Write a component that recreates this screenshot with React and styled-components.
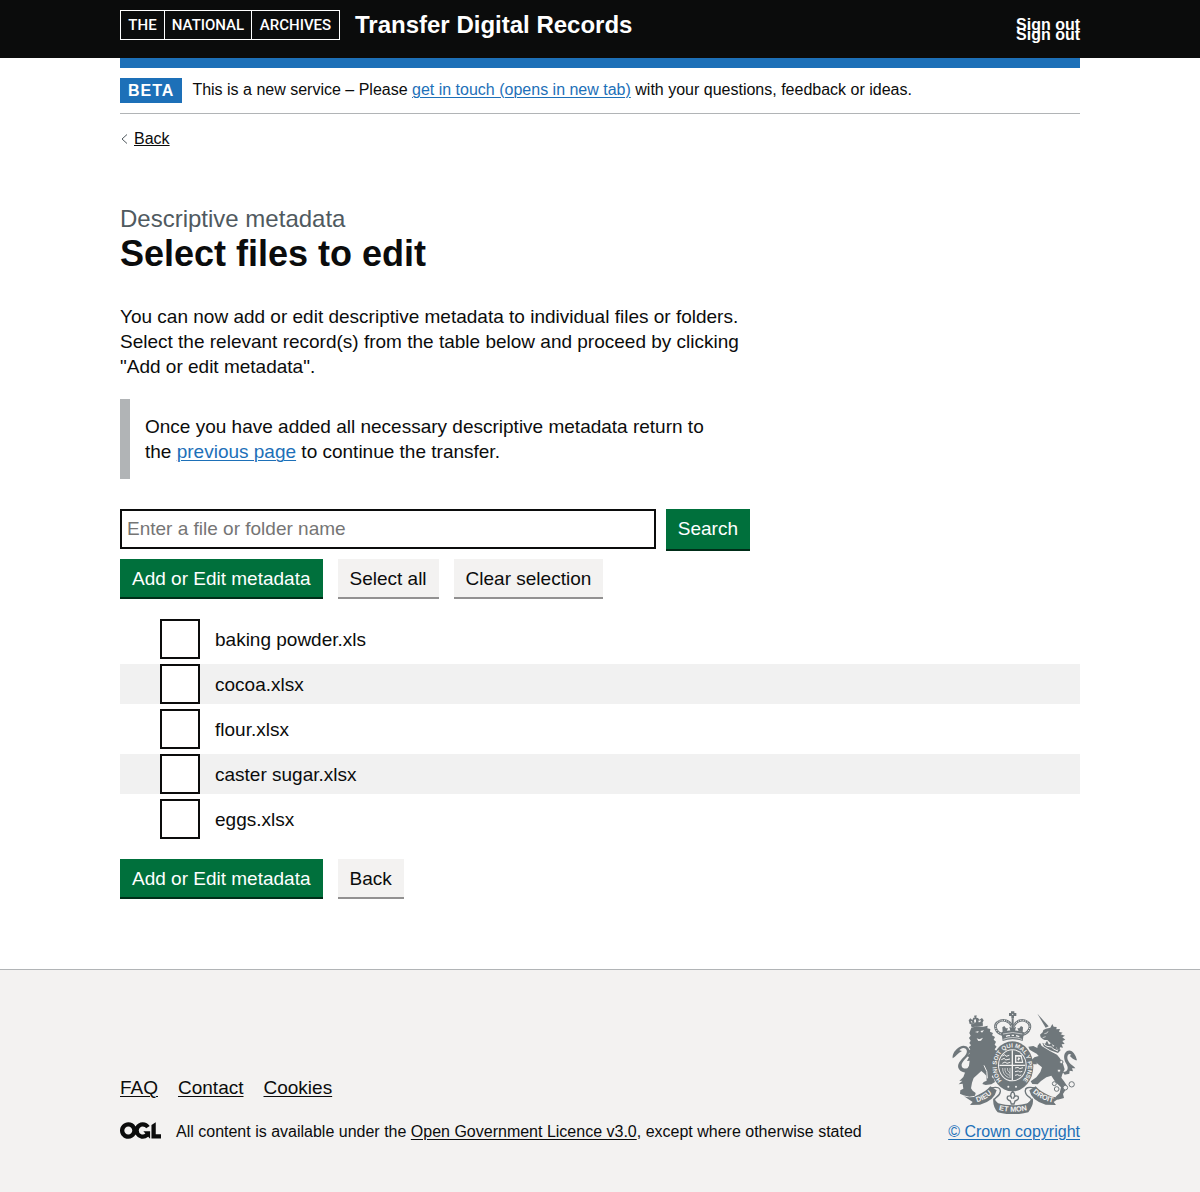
import React, { useState } from "react";
import styled, { createGlobalStyle } from "styled-components";

const ink = "#0b0c0c";
const blue = "#1d70b8";
const green = "#00703c";
const pale = "#f3f2f1";

const GlobalStyle = createGlobalStyle`
  *, *::before, *::after { box-sizing: border-box; }
  html { background: ${pale}; }
  body {
    margin: 0;
    background: #fff;
    color: ${ink};
    font-family: "Liberation Sans", Arial, sans-serif;
    font-size: 19px;
    line-height: 25px;
    -webkit-font-smoothing: antialiased;
  }
`;

const Container = styled.div`
  max-width: 960px;
  margin: 0 auto;
  @media (max-width: 1020px) { margin: 0 30px; }
`;

const Header = styled.header`
  background: ${ink};
  color: #fff;
`;

const HeaderRow = styled(Container)`
  display: flex;
  align-items: flex-start;
  gap: 15px;
  padding: 10px 0 18px;
`;

const LogoLink = styled.a`
  display: grid;
  grid-template-columns: 43px 87px 88px;
  height: 30px;
  border: 1px solid #fff;
  color: #fff;
  text-align: center;
  text-decoration: none;
  font: 500 15px/28px Roboto, sans-serif;
`;

const LogoWord = styled.span`
  & + & { border-left: 1px solid #fff; }
`;

const ServiceLink = styled.a`
  color: #fff;
  font-size: 24px;
  line-height: 30px;
  font-weight: 700;
  text-decoration: none;
`;

const AccountNav = styled.nav`
  display: flex;
  flex-direction: column;
  margin-left: auto;
  padding-top: 10px;
`;

const AccountLink = styled.a`
  color: #fff;
  font-size: 16px;
  line-height: 10px;
  font-weight: 700;
  text-decoration: none;
`;

const HeaderBar = styled(Container)`
  background: ${blue};
  height: 10px;
`;

const PhaseBanner = styled.div`
  display: flex;
  gap: 10px;
  padding: 10px 0;
  border-bottom: 1px solid #b1b4b6;
  font-size: 16px;
`;

const Tag = styled.strong`
  padding: 0 8px;
  background: ${blue};
  color: #fff;
  letter-spacing: 1px;
  text-transform: uppercase;
`;

const PhaseText = styled.span`
  line-height: 24px;
`;

const Link = styled.a`
  color: ${(p) => (p.$plain ? ink : blue)};
  text-decoration: underline;
  text-decoration-thickness: 1px;
  text-underline-offset: 2px;
`;

const BackLink = styled(Link)`
  display: inline-flex;
  align-items: center;
  gap: 6px;
  margin-top: 15px;
  font-size: 16px;
  line-height: 20px;
  text-decoration: none;
  span {
    text-decoration: underline;
    text-decoration-thickness: 1px;
    text-underline-offset: 1px;
  }
`;

const Main = styled.main`
  padding: 54px 0 70px;
`;

const Column = styled.div`
  max-width: 630px;
`;

const Caption = styled.span`
  display: block;
  color: #505a5f;
  font-size: 24px;
  line-height: 30px;
`;

const Title = styled.h1`
  margin: 0 0 30px;
  font-size: 36px;
  line-height: 40px;
`;

const Paragraph = styled.p`
  margin: 0 0 20px;
`;

const Inset = styled.div`
  margin-bottom: 30px;
  padding: 15px;
  border-left: 10px solid #b1b4b6;
`;

const SearchRow = styled.div`
  display: flex;
  gap: 10px;
`;

const SearchBox = styled.input`
  flex: 1;
  min-width: 0;
  height: 40px;
  padding: 5px;
  border: 2px solid ${ink};
  border-radius: 0;
  background: #fff;
  color: ${ink};
  font: inherit;
  &::placeholder { color: #757575; opacity: 1; }
`;

const Button = styled.button`
  height: ${(p) => (p.$tall ? 40 : 38)}px;
  padding: ${(p) => (p.$tall ? "0 12px 2px" : "0 12px")};
  border: 0;
  background: ${(p) => (p.$secondary ? pale : green)};
  color: ${(p) => (p.$secondary ? ink : "#fff")};
  box-shadow: 0 2px 0 ${(p) => (p.$secondary ? "#929191" : "#002d18")};
  font: inherit;
  cursor: pointer;
`;

const ButtonRow = styled.div`
  display: flex;
  flex-wrap: wrap;
  gap: 15px;
  padding-bottom: 2px;
`;

const FileForm = styled.form`
  display: flex;
  flex-direction: column;
  gap: 20px;
  margin-top: 10px;
`;

const FileList = styled.ul`
  display: grid;
  gap: 5px;
  margin: 0;
  padding: 0;
  list-style: none;
`;

const FileRow = styled.li`
  display: flex;
  align-items: center;
  padding-left: 40px;
  &:nth-child(even) { background: #f1f1f1; }
`;

const Checkbox = styled.input`
  appearance: none;
  width: 40px;
  height: 40px;
  margin: 0;
  border: 2px solid ${ink};
  background: #fff;
  cursor: pointer;
  &:checked { box-shadow: inset 0 0 0 8px #fff; background: ${ink}; }
`;

const FileLabel = styled.label`
  padding-left: 15px;
  cursor: pointer;
`;

const Footer = styled.footer`
  padding: 40px 0 48px;
  border-top: 1px solid #b1b4b6;
  background: ${pale};
`;

const FooterRow = styled(Container)`
  display: flex;
  flex-wrap: wrap;
  align-items: flex-end;
  justify-content: space-between;
  gap: 30px;
`;

const FooterLinks = styled.ul`
  display: flex;
  gap: 20px;
  margin: 0 0 20px;
  padding: 0;
  list-style: none;
`;

const Licence = styled.div`
  display: flex;
  align-items: flex-start;
  gap: 15px;
  font-size: 16px;
  line-height: 24px;
`;

const OglMark = styled.svg`
  flex: none;
  display: block;
  margin-top: 2px;
`;

const Copyright = styled(Link)`
  display: flex;
  flex-direction: column;
  align-items: center;
  gap: 6px;
  font-size: 16px;
  line-height: 24px;
`;

function Ogl() {
  return (
    <OglMark width="41" height="17" viewBox="0 0 483.2 195.7" fill={ink} aria-hidden="true">
      <path d="M421.5 142.8V.1l-50.7 32.3v161.1h112.4v-50.7zm-122.3-9.6A47.12 47.12 0 0 1 221 97.8c0-26 21.1-47.1 47.1-47.1 16.7 0 31.4 8.7 39.7 21.8l42.7-27.2A97.63 97.63 0 0 0 268.1 0c-36.5 0-68.3 20.1-85.1 49.7A98 98 0 0 0 97.8 0C43.9 0 0 43.9 0 97.8s43.9 97.8 97.8 97.8c36.5 0 68.3-20.1 85.1-49.7a97.76 97.76 0 0 0 149.6 25.4l19.4 22.2h3v-87.8h-80l24.3 27.5zM97.8 145c-26 0-47.1-21.1-47.1-47.1s21.1-47.1 47.1-47.1 47.1 21.1 47.1 47.1S123.8 145 97.8 145" />
    </OglMark>
  );
}

function Crest() {
  const c = "#6f777b";
  return (
    <svg width="125" height="104" viewBox="36 27 375 312" fill={c} aria-hidden="true">
      <defs>
        <path id="garter" d="M189 242A47 57 0 1 1 245 242" />
        <path id="scrollLeft" d="M106 305Q136 299 160 274" />
        <path id="scrollMid" d="M172 326Q218 339 266 326" />
        <path id="scrollRight" d="M275 272Q304 299 342 305" />
      </defs>

      {/* lion's tail */}
      <path d="M82 216C58 214 48 200 58 184C67 171 84 160 80 148C76 137 62 141 58 148L66 150C53 157 48 166 38 172C36 158 46 145 60 137C76 129 90 140 88 153C86 170 62 181 65 195C67 204 79 205 92 199L94 211Z" />
      {/* lion */}
      <path d="M94 80L110 76L130 77L143 74L142 82L151 84L150 92L159 96L156 103L165 108L161 116L168 122L164 131L170 137L164 145L172 153L168 163L176 176L168 183L172 193L164 203L160 220L155 228L161 232L165 243L154 250L137 252L127 249L131 243L140 239L139 224L132 217L124 210L115 218L101 231L96 245L93 262L98 269L107 276L105 284L88 287L70 283L60 278L61 268L70 263L68 248L56 250L67 239L58 240L70 228L76 212L87 194L89 179L81 180L87 168L80 166L89 157L83 151L91 145L86 139L93 133L88 126L92 119L87 111L92 104L88 96Z" />
      <path d="M105 93L116 90L114 95ZM121 90L132 88L126 95ZM110 112L118 115L129 110L123 119L115 120Z" fill={pale} />
      <path d="M132 193Q144 211 142 232" fill="none" stroke={pale} strokeWidth="3" />
      {/* lion's crown */}
      <path d="M92 70L128 66L129 74L95 79ZM89 69L86 58L91 52L97 57L100 50L104 50L102 44L110 43L109 50L114 51L118 56L126 51L131 58L127 67Z" />
      <path d="M92 62L96 60L97 66ZM102 56L108 55L108 64L103 65ZM115 59L123 58L121 63L116 64Z" fill={pale} />

      {/* royal crown */}
      <path d="M213 31H223V36H229V45H222V52H214V45H207V36H213Z" />
      <circle cx="218" cy="40" r="2" fill={pale} />
      <path d="M189 101C166 95 160 72 174 63C190 52 209 60 216 76M247 101C270 95 276 72 262 63C246 52 228 60 220 76" fill="none" stroke={c} strokeWidth="8" />
      <path d="M189 101C166 95 160 72 174 63C190 52 209 60 216 76M247 101C270 95 276 72 262 63C246 52 228 60 220 76" fill="none" stroke={pale} strokeWidth="3" strokeDasharray="3 4" />
      <path d="M215 52H221V95H215ZM184 94Q218 82 252 94L248 120Q218 110 188 120Z" />
      <path d="M208 77L215 80L218 73L221 80L228 77L225 90H211ZM187 79L193 75L198 82L204 82L200 91L188 94ZM249 79L243 75L238 82L232 82L236 91L248 94Z" />
      <path d="M189 99Q218 90 247 99M190 115Q218 104 246 115" fill="none" stroke={pale} strokeWidth="2" />
      <path d="M198 106L204 104L210 104M215 103H222M228 104L238 107" stroke={pale} strokeWidth="4" fill="none" />

      {/* garter */}
      <ellipse cx="217" cy="196" rx="63" ry="75" />
      <ellipse cx="217" cy="193" rx="43" ry="48" fill={pale} />
      <ellipse cx="217" cy="193" rx="40" ry="45" />
      <text fill={pale} fontFamily="Liberation Sans" fontWeight="700" fontSize="18">
        <textPath href="#garter" startOffset="50%" textAnchor="middle">HONI SOIT QUI MAL Y PENSE</textPath>
      </text>
      <path d="M217 148V238M178 193H256" stroke={pale} strokeWidth="4" />
      <path d="M187 165L194 161L198 166L208 163M184 176L193 172L197 177L210 174M187 187L195 183L201 187L211 184M225 201L234 199L239 203L249 200M225 212L235 210L240 213L247 211M225 223L233 221L238 224L244 222" stroke={pale} strokeWidth="3" fill="none" />
      <path d="M225 162H245L250 186H225ZM229 167V182H246L242 167ZM235 169L241 172L236 179L232 176Z" fill={pale} fillRule="evenodd" />
      <path d="M188 201Q187 221 206 230M195 201Q193 216 208 223M202 201Q201 211 210 216M210 201V232" stroke={pale} strokeWidth="2" fill="none" />
      <circle cx="205" cy="257" r="3" fill={pale} />
      <circle cx="228" cy="257" r="3" fill={pale} />

      {/* unicorn's tail */}
      <path d="M368 213C386 213 386 199 378 187C371 175 369 158 381 150C395 143 407 159 411 178C401 178 395 169 389 165L394 161C385 154 379 165 384 178C391 193 401 194 406 202L396 202L399 211L389 209L388 218L374 221Z" />
      {/* unicorn */}
      <path d="M292 38L326 76L317 80Z" />
      <path d="M318 83L331 80L337 69L341 77L350 78L349 85L360 84L357 92L368 95L362 100L375 104L367 109L376 116L367 120L374 129L365 130L369 140L360 139L359 148L352 144L348 137L338 131L328 123L322 117L314 117L309 115L302 109L300 101L308 94L310 87Z" />
      <path d="M313 98L321 96L324 91M308 110L317 107" fill="none" stroke={pale} strokeWidth="2" />
      <path d="M307 125L315 129L321 119L327 131L334 125L339 137L347 132L351 145L363 146L354 156L331 148L311 136Z" />
      <path d="M311 129L321 136L334 138L342 145L354 150" stroke={pale} strokeWidth="3" fill="none" />
      <path d="M305 135L331 151L351 161L359 171L368 185L374 205L367 220L364 230L372 241L380 253L376 268L369 279L372 291L353 296L347 287L359 276L363 259L346 243L334 224L319 229L303 240L293 250L277 249L272 241L289 229L301 213L306 199L290 186L287 177L291 190L280 190L275 177L283 169L296 165L290 158L279 152L269 146L265 137L280 135L292 141L293 134L300 125Z" />
      {/* chain */}
      <g fill={pale} stroke={c} strokeWidth="3">
        <circle cx="364" cy="183" r="5" />
        <circle cx="357" cy="209" r="5" />
        <circle cx="343" cy="248" r="6" />
        <circle cx="350" cy="264" r="7" />
        <circle cx="376" cy="260" r="7" />
        <circle cx="395" cy="250" r="8" />
      </g>

      {/* motto scroll */}
      <path d="M72 286Q96 294 115 281Q136 273 151 256L170 268Q163 300 120 311L90 312L98 303Z" />
      <path d="M366 286Q343 293 323 281Q302 273 287 256L268 268Q275 300 317 311L348 312L341 303Z" />
      <path d="M152 261Q183 254 181 272Q180 282 168 290Q156 298 174 310M286 261Q253 254 256 272Q257 282 270 290Q281 298 262 310" fill="none" stroke={c} strokeWidth="4" />
      <path d="M160 292L174 307Q218 319 263 307L278 292Q283 309 265 334Q218 346 173 334Q157 315 160 292Z" />
      <g fill={pale} fontFamily="Liberation Sans" fontWeight="700" fontSize="22">
        <text><textPath href="#scrollLeft" startOffset="50%" textAnchor="middle">DIEU</textPath></text>
        <text><textPath href="#scrollMid" startOffset="50%" textAnchor="middle">ET MON</textPath></text>
        <text><textPath href="#scrollRight" startOffset="50%" textAnchor="middle">DROIT</textPath></text>
      </g>
      {/* fleur */}
      <path d="M218 271Q229 282 220 293Q224 281 234 286Q239 296 225 300L222 309H214L211 300Q198 296 203 286Q213 281 216 293Q207 282 218 271Z" fill={pale} stroke={c} strokeWidth="4" />
    </svg>
  );
}

const files = ["baking powder.xls", "cocoa.xlsx", "flour.xlsx", "caster sugar.xlsx", "eggs.xlsx"];

export default function App() {
  const [selected, setSelected] = useState([]);
  const toggle = (name) =>
    setSelected((s) => (s.includes(name) ? s.filter((n) => n !== name) : [...s, name]));

  return (
    <>
      <GlobalStyle />
      <Header>
        <HeaderRow>
          <LogoLink href="#home">
            <LogoWord>THE</LogoWord>
            <LogoWord>NATIONAL</LogoWord>
            <LogoWord>ARCHIVES</LogoWord>
          </LogoLink>
          <ServiceLink href="#service">Transfer Digital Records</ServiceLink>
          <AccountNav aria-label="Account">
            <AccountLink href="#sign-out">Sign out</AccountLink>
            <AccountLink href="#sign-out">Sign out</AccountLink>
          </AccountNav>
        </HeaderRow>
      </Header>
      <HeaderBar />
      <Container>
        <PhaseBanner>
          <Tag>Beta</Tag>
          <PhaseText>
            This is a new service – Please <Link href="#contact">get in touch (opens in new tab)</Link> with
            your questions, feedback or ideas.
          </PhaseText>
        </PhaseBanner>
        <BackLink $plain href="#back">
          <svg width="8" height="10" viewBox="0 0 8 10" fill="none" stroke="#505a5f" aria-hidden="true">
            <path d="M7 0.5L2 5L7 9.5" />
          </svg>
          <span>Back</span>
        </BackLink>
        <Main>
          <Column>
            <Caption>Descriptive metadata</Caption>
            <Title>Select files to edit</Title>
            <Paragraph>
              You can now add or edit descriptive metadata to individual files or folders. Select the
              relevant record(s) from the table below and proceed by clicking "Add or edit metadata".
            </Paragraph>
            <Inset>
              Once you have added all necessary descriptive metadata return to the{" "}
              <Link href="#previous">previous page</Link> to continue the transfer.
            </Inset>
            <SearchRow role="search">
              <SearchBox type="text" aria-label="File or folder name" placeholder="Enter a file or folder name" />
              <Button type="button" $tall>Search</Button>
            </SearchRow>
          </Column>
          <FileForm onSubmit={(e) => e.preventDefault()}>
            <ButtonRow>
              <Button>Add or Edit metadata</Button>
              <Button type="button" $secondary onClick={() => setSelected(files)}>Select all</Button>
              <Button type="button" $secondary onClick={() => setSelected([])}>Clear selection</Button>
            </ButtonRow>
            <FileList>
              {files.map((name, i) => (
                <FileRow key={name}>
                  <Checkbox
                    type="checkbox"
                    id={`file-${i}`}
                    checked={selected.includes(name)}
                    onChange={() => toggle(name)}
                  />
                  <FileLabel htmlFor={`file-${i}`}>{name}</FileLabel>
                </FileRow>
              ))}
            </FileList>
            <ButtonRow>
              <Button>Add or Edit metadata</Button>
              <Button type="button" $secondary>Back</Button>
            </ButtonRow>
          </FileForm>
        </Main>
      </Container>
      <Footer>
        <FooterRow>
          <div>
            <FooterLinks>
              <li><Link $plain href="#faq">FAQ</Link></li>
              <li><Link $plain href="#contact">Contact</Link></li>
              <li><Link $plain href="#cookies">Cookies</Link></li>
            </FooterLinks>
            <Licence>
              <Ogl />
              <span>
                All content is available under the{" "}
                <Link $plain href="#licence">Open Government Licence v3.0</Link>, except where otherwise
                stated
              </span>
            </Licence>
          </div>
          <Copyright href="#copyright">
            <Crest />
            <span>© Crown copyright</span>
          </Copyright>
        </FooterRow>
      </Footer>
    </>
  );
}
